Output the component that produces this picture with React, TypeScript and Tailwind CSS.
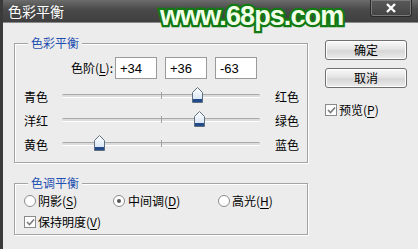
import React from 'react';

const CJK = "font-['Noto_Sans_CJK_SC','Liberation_Sans',sans-serif]";

const Key: React.FC<{ k: string }> = ({ k }) => (
  <>
    (<span className="underline underline-offset-2">{k}</span>)
  </>
);

const Thumb: React.FC<{ left: string }> = ({ left }) => (
  <svg className={`absolute top-[-8px] ${left}`} width="11" height="16" viewBox="0 0 11 16">
    <defs>
      <linearGradient id="tg" x1="0" y1="0" x2="0" y2="1">
        <stop offset="0" stopColor="#ffffff" />
        <stop offset="1" stopColor="#cfe0f2" />
      </linearGradient>
    </defs>
    <path d="M0.5 5.5 L5.5 0.5 L10.5 5.5 V15.5 H0.5 Z" fill="url(#tg)" stroke="#5f6f80" />
    <rect x="1" y="12" width="9" height="3" fill="#234b8c" />
  </svg>
);

const SliderRow: React.FC<{ left: string; right: string; thumb: string }> = ({ left, right, thumb }) => (
  <div className="flex h-[24px] items-center pl-[9px]">
    <span className="w-[38px]">{left}</span>
    <div className="relative mt-[-3px] h-[3px] w-[198px] rounded-full border-t border-[#a9a9a9] bg-[#dcdcdc] shadow-[0_1px_0_#fff]">
      <div className="absolute left-[99px] top-[-3px] h-[7px] w-px bg-[#a0a0a0]" />
      <Thumb left={thumb} />
    </div>
    <span className="ml-[15px]">{right}</span>
  </div>
);

const Group: React.FC<{ title: string; className: string; children: React.ReactNode }> = ({ title, className, children }) => (
  <div className={`relative border border-[#a3a3a3] shadow-[inset_1px_1px_0_#fff,1px_1px_0_#fff] ${className}`}>
    <span className="absolute left-[13px] top-[-10px] bg-[#ececec] px-[3px] leading-[18px] text-[#1f4fb0]">{title}</span>
    {children}
  </div>
);

const Check: React.FC = () => (
  <span className="flex h-[12px] w-[12px] items-center justify-center border border-[#8a8a8a] bg-white">
    <svg width="9" height="8" viewBox="0 0 9 8">
      <path d="M1 4 L3.5 6.5 L8 1.5" fill="none" stroke="#7a7a7a" strokeWidth="1.6" />
    </svg>
  </span>
);

const Radio: React.FC<{ on?: boolean }> = ({ on }) => (
  <span className="flex h-[12px] w-[12px] items-center justify-center rounded-full border border-[#8c8c8c] bg-white">
    {on && <span className="h-[4px] w-[4px] rounded-full bg-[#555]" />}
  </span>
);

const Btn: React.FC<{ label: string }> = ({ label }) => (
  <div className="flex h-[20px] w-[82px] items-center justify-center rounded-[3px] border border-[#707070] bg-[linear-gradient(#fafafa,#e4e4e4_45%,#d6d6d6_55%,#ececec)] shadow-[inset_0_0_0_1px_#fff]">
    {label}
  </div>
);

export default function App() {
  return (
    <div className={`relative flex h-[249px] w-[418px] flex-col overflow-hidden border-l-[3px] border-[#3a3a3a] bg-[#ececec] text-[12px] leading-none text-black ${CJK}`}>
      <div className="flex h-[23px] shrink-0 items-start bg-[linear-gradient(#6c6c6c,#4a4a4a_40%,#3e3e3e)] pl-[5px] shadow-[inset_0_-1px_0_#8a8a8a]">
        <span className="mt-[4px] text-[14px] text-white">色彩平衡</span>
        <div className="ml-auto mr-[6px] flex h-[17px] w-[42px] items-center justify-center rounded-b-[3px] border border-t-0 border-[#2a2a2a] bg-[linear-gradient(#5a5a5a,#444)] shadow-[inset_0_0_0_1px_#7a7a7a]">
          <svg width="12" height="10" viewBox="0 0 12 10">
            <path d="M2 1 L10 9 M10 1 L2 9" stroke="#fff" strokeWidth="2.4" />
          </svg>
        </div>
      </div>

      <span className="absolute left-[157px] top-[3px] text-[27px] font-bold tracking-[-0.9px] text-[#f2ffe8] [-webkit-text-stroke:4.5px_#127a12] [font-family:'Liberation_Sans',sans-serif] [paint-order:stroke_fill]">
        www.68ps.com
      </span>

      <div className="flex flex-1">
        <div className="pl-[11px] pt-[20px]">
          <Group title="色彩平衡" className="h-[120px] w-[294px]">
            <div className="flex items-center pt-[13px]">
              <span className="w-[100px] pr-[2px] text-right">
                色阶<Key k="L" />:
              </span>
              <div className="flex gap-[8px] font-['Liberation_Sans',sans-serif] text-[13px]">
                {['+34', '+36', '-63'].map((v) => (
                  <div key={v} className="flex h-[22px] w-[42px] items-center border border-[#9a9a9a] bg-white pl-[4px]">
                    {v}
                  </div>
                ))}
              </div>
            </div>
            <div className="mt-[6px]">
              <SliderRow left="青色" right="红色" thumb="left-[130px]" />
              <SliderRow left="洋红" right="绿色" thumb="left-[132px]" />
              <SliderRow left="黄色" right="蓝色" thumb="left-[32px]" />
            </div>
          </Group>

          <Group title="色调平衡" className="mt-[20px] h-[52px] w-[294px]">
            <div className="flex h-[20px] items-center pl-[9px] pt-[13px]">
              <Radio />
              <span className="ml-[2px] w-[75px]">
                阴影<Key k="S" />
              </span>
              <Radio on />
              <span className="ml-[3px] w-[90px]">
                中间调<Key k="D" />
              </span>
              <Radio />
              <span className="ml-[2px]">
                高光<Key k="H" />
              </span>
            </div>
            <div className="mt-[12px] flex items-center pl-[9px]">
              <Check />
              <span className="ml-[2px]">
                保持明度<Key k="V" />
              </span>
            </div>
          </Group>
        </div>

        <div className="ml-[17px] flex flex-col pt-[17px]">
          <Btn label="确定" />
          <div className="mt-[8px]">
            <Btn label="取消" />
          </div>
          <div className="mt-[16px] flex items-center">
            <Check />
            <span className="ml-[2px]">
              预览<Key k="P" />
            </span>
          </div>
        </div>
      </div>
    </div>
  );
}
